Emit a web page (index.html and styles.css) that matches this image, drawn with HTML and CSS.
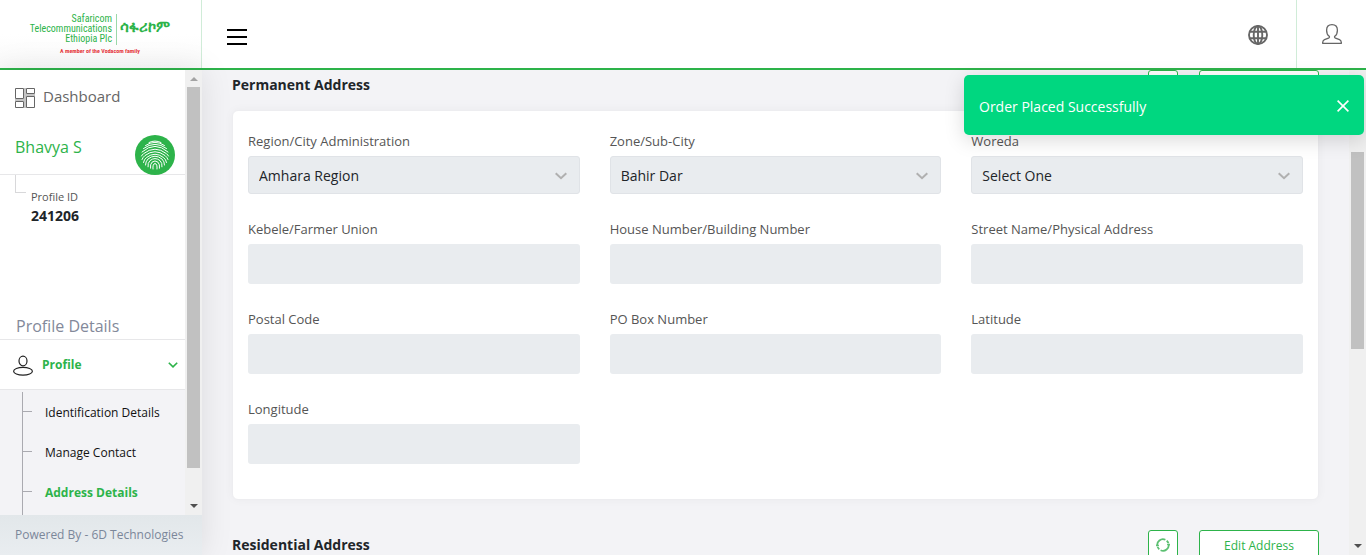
FILE: index.html
```html
<!DOCTYPE html>
<html lang="en">
<head>
<meta charset="utf-8">
<meta name="viewport" content="width=device-width, initial-scale=1">
<title>Address Details</title>
<link rel="stylesheet" href="styles.css">
</head>
<body>
<header class="topbar">
  <a class="brand" href="#" aria-label="Safaricom Telecommunications Ethiopia Plc">
    <span class="brand-row">
      <span class="brand-name"><span>Safaricom</span><span>Telecommunications</span><span>Ethiopia Plc</span></span>
      <span class="brand-local" lang="am">ሳፋሪኮም</span>
    </span>
    <span class="brand-tag">A member of the Vodacom family</span>
  </a>
  <button class="icon-btn menu-btn" type="button" aria-label="Toggle menu">
    <svg width="20" height="16" viewBox="0 0 20 16" fill="#000"><path d="M0 0h20v2H0zM0 7h20v2H0zM0 14h20v2H0z"/></svg>
  </button>
  <button class="icon-btn lang-btn" type="button" aria-label="Language">
    <svg width="20" height="20" viewBox="0 0 20 20" fill="none" stroke="#666" stroke-width="1.9"><circle cx="10" cy="10" r="9"/><ellipse cx="10" cy="10" rx="4.3" ry="9"/><path d="M10 1v18M1.800 6.700h16.400M1.800 13.300h16.400"/></svg>
  </button>
  <button class="icon-btn user-btn" type="button" aria-label="Account">
    <svg width="20" height="20" viewBox="0 0 20 20" fill="none" stroke="#666" stroke-width="1.300" stroke-linejoin="round"><path d="M10 .7C6.600 .7 4.600 3.100 4.600 6.200c0 2.500.9 4.900 2.600 6 .5.800.2 1.700-.7 2L2.500 15.700C1 16.300.6 17.500.6 19.300h18.800c0-1.800-.4-3-1.900-3.600l-4-1.500c-.9-.3-1.200-1.200-.7-2 1.700-1.100 2.600-3.500 2.600-6C15.400 3.100 13.400.7 10 .7z"/></svg>
  </button>
</header>

<div class="layout">
  <aside class="sidebar">
    <div class="side-scroll">
      <nav class="side-content" aria-label="Main">
        <a class="dash" href="#">
          <svg width="20" height="20" viewBox="0 0 20 20" fill="none"><path d="M10 0v20M0 12h9M11 7h9" stroke="#c4c4c4" stroke-width="2"/><path d="M.5.5h8v10h-8zM11.500.5h8v5h-8zM.5 13.500h8v6h-8zM11.500 8.500h8v11h-8z" stroke="#666" fill="#fff"/></svg>
          <span>Dashboard</span>
        </a>
        <div class="user">
          <span class="user-name">Bhavya S</span>
          <svg class="finger" width="40" height="40" viewBox="0 0 40 40" fill="none" stroke="#fff" stroke-linecap="round"><circle cx="20" cy="20" r="20" fill="#2db34a" stroke="none"/><path d="M14 7.500q6-3 12 0M10.500 10.500q9.500-6.500 19 0M8.500 13.500q11.500-8.500 23 0M7 17q13-11.500 26 0M6.500 21q.5-1 2-2.300 11.500-9 23 0 1.500 1.300 2 2.300M7 24.500q1-2.500 3-4 10-7.500 20 0 2 1.500 3 4M8.500 27.500q.5-3 3-5 8.500-6.500 17 0 2.500 2 3 5M10.500 30q0-3.500 2.500-6 7-5.500 14 0 2.500 2.500 2.500 6M13 31.800q-.5-3.800 2-6.200 5-4 10 0 2.500 2.400 2 6.200M15.500 33.200q-.5-4 1.500-6 3-2.500 6 0 2 2 1.500 6M18 34q-.5-5 2-5.500 2.500.5 2 5.500"/></svg>
        </div>
        <div class="profile-id">
          <span class="branch"></span>
          <div><div class="pid-label">Profile ID</div><div class="pid-value">241206</div></div>
        </div>
        <h2 class="side-title">Profile Details</h2>
        <button class="profile-toggle" type="button" aria-expanded="true">
          <svg width="20" height="22" viewBox="0 0 20 22" fill="none" stroke="#222" stroke-width="1.200"><ellipse cx="10" cy="7" rx="4" ry="4.800"/><ellipse cx="10" cy="17.200" rx="9.400" ry="3.900"/></svg>
          <span>Profile</span>
          <svg width="10" height="6" viewBox="0 0 10 6" fill="none" stroke="#2db34a" stroke-width="1.600"><path d="M.8.8 5 4.900 9.200.8"/></svg>
        </button>
        <ul class="submenu">
          <li><a href="#">Identification Details</a></li>
          <li><a href="#">Manage Contact</a></li>
          <li><a class="active" href="#" aria-current="page">Address Details</a></li>
        </ul>
      </nav>
      <div class="bar side-bar" aria-hidden="true">
        <svg width="8" height="4" viewBox="0 0 8 4" fill="#a3a3a3"><path d="M0 4 4 0l4 4z"/></svg>
        <span class="thumb side-thumb"></span>
        <svg width="8" height="4" viewBox="0 0 8 4" fill="#505050"><path d="M0 0h8L4 4z"/></svg>
      </div>
    </div>
    <footer class="powered">Powered By - 6D Technologies</footer>
  </aside>

  <main class="main">
    <section>
      <div class="section-head">
        <h3>Permanent Address</h3>
        <button class="outline refresh" type="button" aria-label="Refresh permanent address"></button>
        <button class="outline edit" type="button">Edit Address</button>
      </div>
      <form class="card">
        <div class="field"><label for="region">Region/City Administration</label><div class="select"><select id="region" disabled><option>Amhara Region</option></select><svg width="12" height="8" viewBox="0 0 12 8"><path d="M.7 1.200 6 6.200l5.300-5"/></svg></div></div>
        <div class="field"><label for="zone">Zone/Sub-City</label><div class="select"><select id="zone" disabled><option>Bahir Dar</option></select><svg width="12" height="8" viewBox="0 0 12 8"><path d="M.7 1.200 6 6.200l5.300-5"/></svg></div></div>
        <div class="field"><label for="woreda">Woreda</label><div class="select"><select id="woreda" disabled><option>Select One</option></select><svg width="12" height="8" viewBox="0 0 12 8"><path d="M.7 1.200 6 6.200l5.300-5"/></svg></div></div>
        <div class="field"><label for="kebele">Kebele/Farmer Union</label><input id="kebele" type="text" disabled></div>
        <div class="field"><label for="house">House Number/Building Number</label><input id="house" type="text" disabled></div>
        <div class="field"><label for="street">Street Name/Physical Address</label><input id="street" type="text" disabled></div>
        <div class="field"><label for="postal">Postal Code</label><input id="postal" type="text" disabled></div>
        <div class="field"><label for="pobox">PO Box Number</label><input id="pobox" type="text" disabled></div>
        <div class="field"><label for="lat">Latitude</label><input id="lat" type="text" disabled></div>
        <div class="field"><label for="lng">Longitude</label><input id="lng" type="text" disabled></div>
      </form>
    </section>
    <section>
      <div class="section-head">
        <h3>Residential Address</h3>
        <button class="outline refresh" type="button" aria-label="Refresh residential address">
          <svg width="14" height="14" viewBox="0 0 14 14" fill="none" stroke="#5cc072" stroke-width="1.800"><path d="M1.400 8.200A5.700 5.700 0 0 1 9.400 1.800M12.600 5.800A5.700 5.700 0 0 1 4.600 12.200M10.700 2.700A5.700 5.700 0 0 1 12.400 5.200M3.300 11.300A5.700 5.700 0 0 1 1.600 8.800"/><path d="M0 7.300h2.900M11.100 6.700H14" stroke-width="1.200"/></svg>
        </button>
        <button class="outline edit" type="button">Edit Address</button>
      </div>
    </section>
  </main>

  <div class="bar page-bar" aria-hidden="true">
    <span class="thumb page-thumb"></span>
    <svg width="8" height="4" viewBox="0 0 8 4" fill="#505050"><path d="M0 0h8L4 4z"/></svg>
  </div>
</div>

<div class="toast" role="status">
  <span>Order Placed Successfully</span>
  <button class="toast-close" type="button" aria-label="Close"><svg width="12" height="12" viewBox="0 0 12 12" stroke="#fff" stroke-width="1.600"><path d="M.6.6l10.800 10.800M11.400.6.6 11.400"/></svg></button>
</div>
</body>
</html>
```
FILE: styles.css
```css
* { box-sizing: border-box; }

body {
  margin: 0;
  height: 100vh;
  display: flex;
  flex-direction: column;
  overflow: hidden;
  font-family: "Open Sans", "Noto Sans", sans-serif;
  font-size: 13px;
  color: #212529;
  background: #f3f3f6;
}

a { color: inherit; text-decoration: none; }
button { font: inherit; padding: 0; cursor: pointer; }
svg { display: block; flex: none; }

/* Top bar */
.topbar {
  flex: none;
  display: flex;
  height: 70px;
  background: #fff;
  border-bottom: 2px solid #2db34a;
}

.brand {
  width: 202px;
  padding: 14px 32px 0 28px;
  border-right: 1px solid #d0ecd8;
  background: linear-gradient(#fff 50%, #fafafa);
  color: #2db34a;
  font-family: "Liberation Sans Narrow", "Roboto Condensed", Roboto, sans-serif;
}

.brand-row { display: flex; }

.brand-name {
  flex: none;
  width: 89px;
  height: 31px;
  padding-right: 4px;
  display: flex;
  flex-direction: column;
  align-items: flex-end;
  white-space: nowrap;
  font-size: 10px;
  line-height: 10px;
  border-right: 1px solid #9bd8a9;
}

.brand-local {
  padding-left: 3px;
  font-size: 15px;
  line-height: 26px;
  font-weight: 700;
  white-space: nowrap;
}

.brand-tag {
  display: block;
  margin-left: 32px;
  font-size: 6px;
  line-height: 12px;
  font-weight: 700;
  color: #e8383d;
  white-space: nowrap;
}

.icon-btn {
  display: flex;
  align-items: center;
  justify-content: center;
  border: 0;
  background: none;
}

.menu-btn { width: 70px; padding-top: 6px; }
.lang-btn { width: 76px; margin-left: auto; padding-top: 2px; }
.user-btn { width: 70px; border-left: 1px solid #d0ecd8; }

/* Page columns */
.layout { flex: 1; min-height: 0; display: flex; }

.sidebar {
  flex: none;
  width: 202px;
  display: flex;
  flex-direction: column;
  z-index: 1;
  box-shadow: 0 0 30px rgba(0, 0, 0, .1);
}

.side-scroll { flex: 1; min-height: 0; display: flex; background: #fff; }
.side-content { flex: 1; min-width: 0; overflow: hidden; }

.dash {
  display: flex;
  align-items: flex-end;
  gap: 8px;
  padding: 0 15px 2px;
  height: 40px;
  font-size: 15px;
  line-height: 20px;
  color: #666;
}
.dash span { padding-bottom: 2px; }

.user {
  display: flex;
  justify-content: space-between;
  align-items: flex-end;
  padding: 0 10px 0 15px;
  height: 65px;
  border-bottom: 1px solid #e7e7e9;
}

.user-name { font-size: 16px; line-height: 24px; padding-bottom: 15px; color: #2db34a; }
.finger { margin-bottom: -1px; }

.profile-id { display: flex; height: 139px; padding-left: 15px; }
.branch {
  width: 11px;
  height: 18px;
  margin-right: 5px;
  border: solid #d8d8da;
  border-width: 0 0 1px 1px;
}
.pid-label { padding-top: 14px; font-size: 11px; line-height: 16px; color: #555; }
.pid-value { font-size: 14px; line-height: 22px; font-weight: 700; }

.side-title {
  margin: 0;
  padding: 0 16px 1px;
  font-size: 16px;
  line-height: 24px;
  font-weight: 400;
  color: #83899a;
}

.profile-toggle {
  display: flex;
  align-items: center;
  width: 100%;
  height: 51px;
  padding: 0 7px 0 13px;
  gap: 9px;
  background: #fff;
  border: solid #e7e7e9;
  border-width: 1px 0;
  font-size: 12px;
  font-weight: 700;
  color: #2db34a;
}
.profile-toggle span { flex: 1; text-align: left; }

.submenu {
  list-style: none;
  margin: 0;
  padding: 2px 0 0 22px;
  background: #f3f3f6;
}
.submenu li {
  display: flex;
  align-items: center;
  height: 40px;
  border-left: 1px solid #aaaab0;
  font-size: 12px;
  color: #111;
}
.submenu li::before { content: ""; width: 9px; height: 1px; margin: 0 13px 2px 0; background: #aaaab0; }
.submenu li:last-child { height: 50px; padding-bottom: 10px; }
.submenu .active { color: #2db34a; font-weight: 700; }

.powered {
  height: 40px;
  padding: 0 15px;
  font-size: 12px;
  line-height: 40px;
  color: #7b879a;
  white-space: nowrap;
  background: linear-gradient(#e2e7ea, #e9edf0);
}

/* Scroll bars */
.bar {
  flex: none;
  width: 17px;
  display: flex;
  flex-direction: column;
  align-items: center;
  background: #f0f0f0;
}
.thumb { width: 13px; background: #c1c1c1; }
.side-bar { padding: 7px 0; }
.side-thumb { flex: 1; margin: 6px 0 36px; }
.page-bar { padding: 82px 0 7px; justify-content: space-between; }
.page-thumb { height: 197px; }

/* Content */
.main { flex: 1; min-width: 0; padding: 0 30px; overflow: hidden; }

.section-head { display: flex; align-items: center; gap: 21px; height: 30px; }
.section-head h3 { flex: 1; margin: 0; font-size: 14px; line-height: 20px; font-weight: 700; }

.outline {
  display: flex;
  align-items: center;
  justify-content: center;
  height: 30px;
  border: 1px solid #2db34a;
  border-radius: 3px;
  background: #fff;
  color: #2db34a;
}
.refresh { width: 30px; padding-right: 1px; }
.edit { width: 120px; font-size: 12px; }

.card {
  display: grid;
  grid-template-columns: repeat(3, 1fr);
  gap: 25px 30px;
  margin: 10px 0 30px;
  padding: 20px 15px 35px;
  background: #fff;
  border: 1px solid #ededf0;
  border-radius: 6px;
  box-shadow: 0 0 10px rgba(0, 0, 0, .04);
}

.field label { display: block; line-height: 20px; margin-bottom: 5px; color: #555; }

.field input,
.field select {
  display: block;
  width: 100%;
  height: 40px;
  border: 0;
  border-radius: 3px;
  background: #e9ecef;
}

.select { position: relative; }
.field select {
  height: 38px;
  padding: 0 10px;
  border: 1px solid #e0e3e7;
  appearance: none;
  font: 14px "Open Sans", sans-serif;
  color: #212529;
  opacity: 1;
}
.select svg {
  position: absolute;
  right: 13px;
  top: 16px;
  fill: none;
  stroke: #b0b0b0;
  stroke-width: 2;
}

/* Notification */
.toast {
  position: absolute;
  z-index: 2;
  top: 75px;
  right: 2px;
  width: 400px;
  height: 60px;
  padding: 2px 15px 0;
  display: flex;
  align-items: center;
  justify-content: space-between;
  border-radius: 5px;
  background: #00d780;
  color: #fff;
  font-size: 14px;
  box-shadow: 0 5px 20px rgba(0, 0, 0, .15);
}
.toast-close { border: 0; background: none; }
```
